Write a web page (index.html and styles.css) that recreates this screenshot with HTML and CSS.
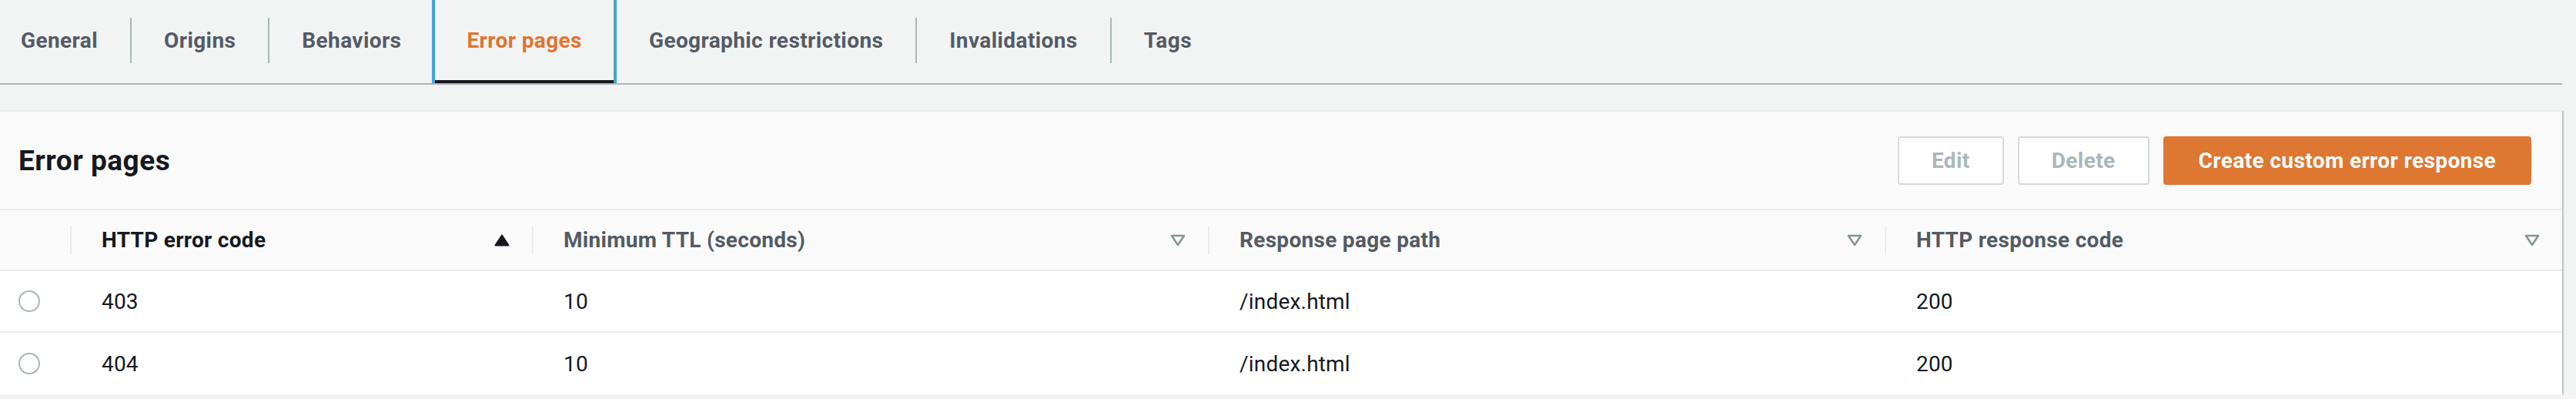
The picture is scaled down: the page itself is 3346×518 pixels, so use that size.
FILE: index.html
```html
<!DOCTYPE html>
<html lang="en">
<head>
<meta charset="utf-8">
<title>Error pages</title>
<link rel="stylesheet" href="styles.css">
</head>
<body>
<div class="page">
  <nav class="tabs">
    <a class="tab tab-first">General</a>
    <span class="tab-sep"></span>
    <a class="tab">Origins</a>
    <span class="tab-sep"></span>
    <a class="tab tab-before-active">Behaviors</a>
    <a class="tab tab-active">Error pages</a>
    <a class="tab">Geographic restrictions</a>
    <span class="tab-sep"></span>
    <a class="tab">Invalidations</a>
    <span class="tab-sep"></span>
    <a class="tab">Tags</a>
  </nav>

  <section class="panel">
    <header class="panel-header">
      <h2 class="panel-title">Error pages</h2>
      <div class="actions">
        <button class="btn btn-disabled" type="button">Edit</button>
        <button class="btn btn-disabled" type="button">Delete</button>
        <button class="btn btn-primary" type="button">Create custom error response</button>
      </div>
    </header>

    <table class="grid">
      <colgroup>
        <col class="col-select">
        <col class="col-code">
        <col class="col-ttl">
        <col class="col-path">
        <col class="col-resp">
      </colgroup>
      <thead>
        <tr>
          <th class="th-select"></th>
          <th><div class="th-inner th-sorted"><span>HTTP error code</span>
            <svg class="sort-icon" width="20" height="16" viewBox="0 0 20 16"><path d="M10 1.5 L18.5 14.5 L1.5 14.5 Z" fill="#16191f" stroke="#16191f" stroke-width="2" stroke-linejoin="round"/></svg></div></th>
          <th><div class="th-inner"><span>Minimum TTL (seconds)</span>
            <svg class="sort-icon" width="20" height="16" viewBox="0 0 20 16"><path d="M2 2 L18 2 L10 14 Z" fill="none" stroke="#879596" stroke-width="2.6" stroke-linejoin="round"/></svg></div></th>
          <th><div class="th-inner"><span>Response page path</span>
            <svg class="sort-icon" width="20" height="16" viewBox="0 0 20 16"><path d="M2 2 L18 2 L10 14 Z" fill="none" stroke="#879596" stroke-width="2.6" stroke-linejoin="round"/></svg></div></th>
          <th><div class="th-inner"><span>HTTP response code</span>
            <svg class="sort-icon" width="20" height="16" viewBox="0 0 20 16"><path d="M2 2 L18 2 L10 14 Z" fill="none" stroke="#879596" stroke-width="2.6" stroke-linejoin="round"/></svg></div></th>
        </tr>
      </thead>
      <tbody>
        <tr>
          <td class="td-select"><span class="radio"></span></td>
          <td class="td-text">403</td>
          <td class="td-text">10</td>
          <td class="td-text">/index.html</td>
          <td class="td-text">200</td>
        </tr>
        <tr class="last">
          <td class="td-select"><span class="radio"></span></td>
          <td class="td-text">404</td>
          <td class="td-text">10</td>
          <td class="td-text">/index.html</td>
          <td class="td-text">200</td>
        </tr>
      </tbody>
    </table>
  </section>
</div>
</body>
</html>
```

FILE: styles.css
```css
html, body {
  margin: 0;
  padding: 0;
  background: #f2f3f3;
}

body {
  font-family: Roboto, "Liberation Sans", Arial, sans-serif;
  color: #16191f;
  font-size: 28px;
}

.page {
  margin-right: 18px;
}

/* ---------- Tabs ---------- */
.tabs {
  display: flex;
  align-items: center;
  height: 108px;
  border-bottom: 2px solid #aab7b8;
}

.tab {
  display: flex;
  align-items: center;
  height: 108px;
  box-sizing: border-box;
  padding: 0 42px 4px;
  font-weight: 700;
  font-size: 28px;
  color: #545b64;
  white-space: nowrap;
  cursor: pointer;
  letter-spacing: 0.4px;
}

.tab-first {
  padding-left: 27px;
}

.tab-before-active {
  padding-right: 40px;
}

.tab-active {
  color: #e07530;
  border-left: 4px solid #44a6d4;
  border-right: 4px solid #44a6d4;
  padding: 0 41px 4px;
  box-shadow: inset 0 -4px 0 #16191f;
}

.tab-sep {
  width: 2px;
  height: 59px;
  margin-bottom: 3px;
  background: #aab7b8;
  flex: none;
}

/* ---------- Panel ---------- */
.panel {
  margin-top: 33px;
  background: #fafafa;
  border-top: 2px solid #eaeded;
  box-shadow: 0 2px 1px rgba(0, 28, 36, 0.35), 2px 1px 1px rgba(0, 28, 36, 0.18);
}

.panel-header {
  display: flex;
  align-items: center;
  justify-content: space-between;
  height: 128px;
  box-sizing: border-box;
  padding: 0 40px 0 24px;
  border-bottom: 2px solid #eaeded;
}

.panel-title {
  margin: 0;
  font-size: 37px;
  font-weight: 700;
  color: #16191f;
  letter-spacing: 0.5px;
}

.actions {
  display: flex;
  gap: 18px;
}

.btn {
  height: 63px;
  box-sizing: border-box;
  border-radius: 4px;
  font-family: inherit;
  font-size: 28px;
  font-weight: 700;
  letter-spacing: 0.4px;
  padding: 0 42px;
  white-space: nowrap;
}

.btn-disabled {
  background: #ffffff;
  border: 2px solid #d5dbdb;
  color: #aab7b8;
}

.btn-primary {
  background: #de7732;
  border: 2px solid #de7732;
  color: #ffffff;
  padding: 0 44px;
}

/* ---------- Table ---------- */
.grid {
  width: 100%;
  border-collapse: separate;
  border-spacing: 0;
  table-layout: fixed;
}

.col-select { width: 91px; }
.col-code { width: 600px; }
.col-ttl { width: 878px; }
.col-path { width: 879px; }
.col-resp { width: auto; }

.grid th {
  height: 77px;
  padding: 0;
  background: #fafafa;
  border-bottom: 2px solid #eaeded;
  vertical-align: middle;
  text-align: left;
}

.th-inner {
  display: flex;
  align-items: center;
  justify-content: space-between;
  height: 38px;
  border-left: 2px solid #eaeded;
  padding: 0 29px 0 39px;
  font-size: 28px;
  font-weight: 700;
  color: #545b64;
  letter-spacing: 0.3px;
  white-space: nowrap;
}

.th-sorted {
  color: #16191f;
}

.sort-icon {
  flex: none;
  display: block;
}

.grid td {
  height: 78px;
  padding: 0;
  background: #ffffff;
  border-bottom: 2px solid #eaeded;
  vertical-align: middle;
}

.grid tr.last td {
  height: 80px;
  border-bottom: none;
}

.td-text {
  padding-left: 41px !important;
  font-size: 28px;
  font-weight: 400;
  color: #16191f;
  letter-spacing: 0.2px;
}

.td-select {
  padding-left: 24px !important;
}

.radio {
  display: block;
  width: 28px;
  height: 28px;
  box-sizing: border-box;
  border: 2px solid #aab7b8;
  border-radius: 50%;
  background: #ffffff;
}
```
